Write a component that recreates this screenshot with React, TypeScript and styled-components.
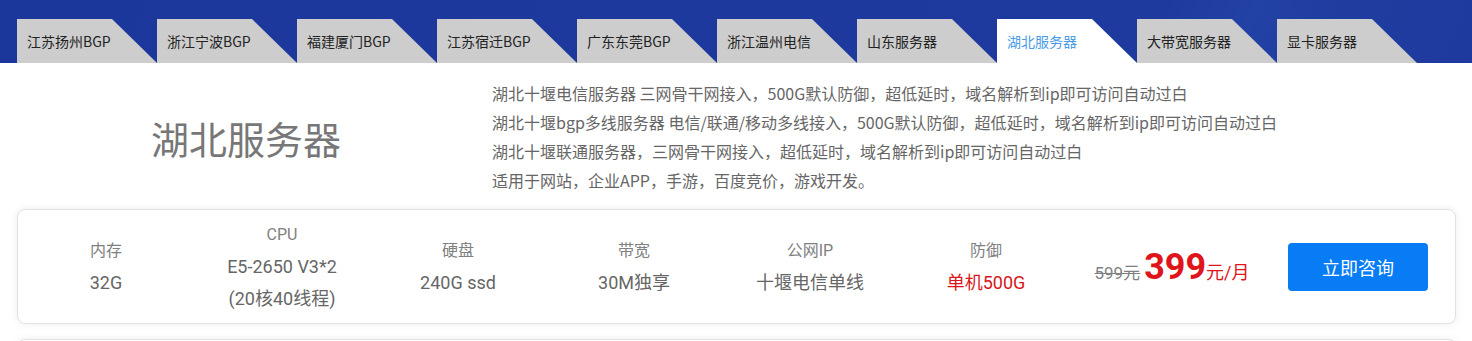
import React from 'react';
import styled, { createGlobalStyle } from 'styled-components';

const GlobalStyle = createGlobalStyle`
  html, body {
    margin: 0;
    padding: 0;
    background: #fff;
    overflow: hidden;
  }
  body {
    font-family: Roboto, "Noto Sans CJK SC", sans-serif;
  }
`;

const cjk = `"Microsoft YaHei", "Noto Sans CJK SC", sans-serif`;

const Header = styled.div`
  height: 63px;
  padding-left: 17px;
  display: flex;
  align-items: flex-end;
  background: linear-gradient(112deg, #1c379b 0%, #1e3a9e 78%, #2342a6 84%, #1f3c9f 90%, #1e3a9e 100%);
`;

const Tab = styled.div<{ $active?: boolean }>`
  width: 140px;
  height: 44px;
  flex: none;
  display: flex;
  align-items: center;
  padding-left: 10px;
  box-sizing: border-box;
  font-family: ${cjk};
  font-size: 14px;
  color: ${({ $active }) => ($active ? '#4a9be8' : '#222')};
  background: ${({ $active }) => ($active ? '#fff' : '#cdcdcd')};
  clip-path: polygon(0 0, 95px 0, 140px 100%, 0 100%);
  cursor: pointer;
`;

const Intro = styled.div`
  display: flex;
  align-items: center;
  padding: 16px 0 14px;
`;

const Title = styled.h1`
  width: 492px;
  margin: 0;
  text-align: center;
  font-family: ${cjk};
  font-size: 38px;
  font-weight: 400;
  color: #777;
`;

const Desc = styled.div`
  font-family: ${cjk};
  font-size: 16px;
  line-height: 29px;
  color: #666;
`;

const Card = styled.div`
  margin: 0 16px 15px 17px;
  height: 115px;
  box-sizing: border-box;
  border: 1px solid #e2e2e2;
  border-radius: 8px;
  background: #fff;
  box-shadow: 0 0 8px rgba(0, 0, 0, 0.07);
  display: flex;
  align-items: center;
`;

const Spec = styled.div`
  width: 176px;
  flex: none;
  text-align: center;
  line-height: 32px;
`;

const Label = styled.div`
  font-size: 16px;
  color: #808080;
`;

const Value = styled.div<{ $red?: boolean }>`
  font-size: 18px;
  color: ${({ $red }) => ($red ? '#d8161b' : '#666')};
`;

const Price = styled.div`
  width: 196px;
  flex: none;
  display: flex;
  align-items: baseline;
  justify-content: center;
  color: #e0141b;
`;

const OldPrice = styled.span`
  font-size: 17px;
  color: #808080;
  text-decoration: line-through;
  margin-right: 4px;
`;

const NewPrice = styled.span`
  font-size: 36px;
  font-weight: 700;
`;

const Unit = styled.span`
  font-size: 18px;
`;

const Button = styled.button`
  margin-left: 18px;
  width: 140px;
  height: 48px;
  border: none;
  border-radius: 4px;
  background: #087cf5;
  color: #fff;
  font-family: ${cjk};
  font-size: 18px;
  cursor: pointer;
`;

const tabs = [
  '江苏扬州BGP',
  '浙江宁波BGP',
  '福建厦门BGP',
  '江苏宿迁BGP',
  '广东东莞BGP',
  '浙江温州电信',
  '山东服务器',
  '湖北服务器',
  '大带宽服务器',
  '显卡服务器',
];

const specs: { label: string; values: string[]; red?: boolean }[] = [
  { label: '内存', values: ['32G'] },
  { label: 'CPU', values: ['E5-2650 V3*2', '(20核40线程)'] },
  { label: '硬盘', values: ['240G ssd'] },
  { label: '带宽', values: ['30M独享'] },
  { label: '公网IP', values: ['十堰电信单线'] },
  { label: '防御', values: ['单机500G'], red: true },
];

export default function App() {
  return (
    <>
      <GlobalStyle />
      <Header>
        {tabs.map((t) => (
          <Tab key={t} $active={t === '湖北服务器'}>{t}</Tab>
        ))}
      </Header>
      <Intro>
        <Title>湖北服务器</Title>
        <Desc>
          <div>湖北十堰电信服务器 三网骨干网接入，500G默认防御，超低延时，域名解析到ip即可访问自动过白</div>
          <div>湖北十堰bgp多线服务器 电信/联通/移动多线接入，500G默认防御，超低延时，域名解析到ip即可访问自动过白</div>
          <div>湖北十堰联通服务器，三网骨干网接入，超低延时，域名解析到ip即可访问自动过白</div>
          <div>适用于网站，企业APP，手游，百度竞价，游戏开发。</div>
        </Desc>
      </Intro>
      <Card>
        {specs.map((s) => (
          <Spec key={s.label}>
            <Label>{s.label}</Label>
            {s.values.map((v) => (
              <Value key={v} $red={s.red}>{v}</Value>
            ))}
          </Spec>
        ))}
        <Price>
          <OldPrice>599元</OldPrice>
          <NewPrice>399</NewPrice>
          <Unit>元/月</Unit>
        </Price>
        <Button>立即咨询</Button>
      </Card>
      <Card />
    </>
  );
}
